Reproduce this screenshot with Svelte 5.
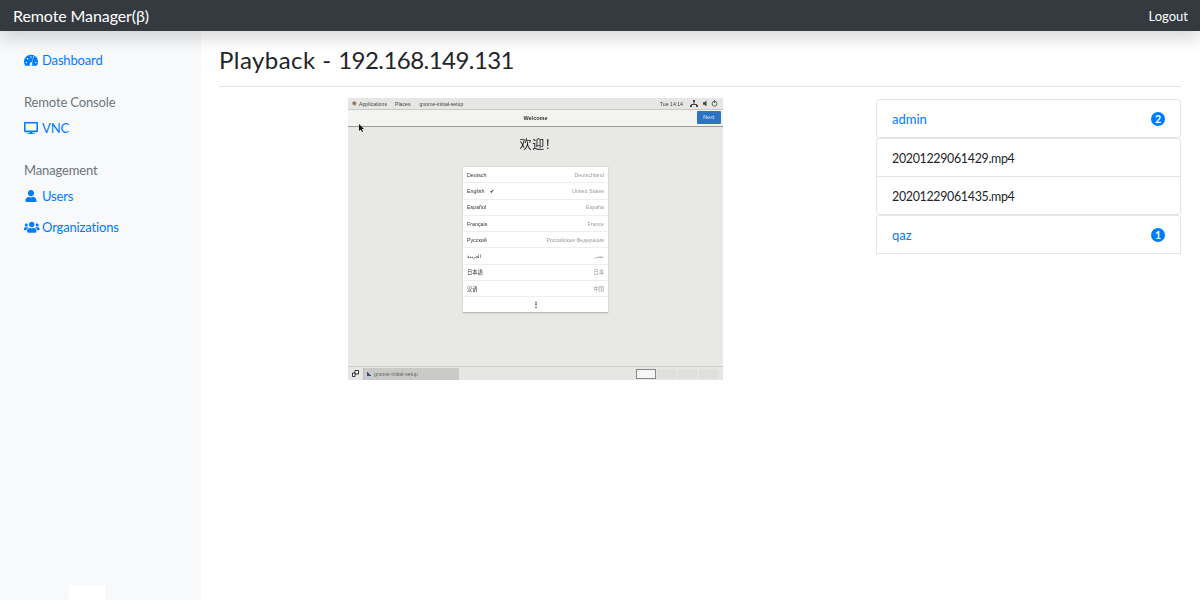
<script lang="ts">
  const languages = [
    { name: "Deutsch", region: "Deutschland" },
    { name: "English", region: "United States", checked: true },
    { name: "Español", region: "España" },
    { name: "Français", region: "France" },
    { name: "Русский", region: "Российская Федерация" },
    { name: "العربية", region: "مصر" },
    { name: "日本語", region: "日本" },
    { name: "汉语", region: "中国" },
  ];
</script>

<header class="navbar">
  <span class="brand">Remote Manager(β)</span>
  <span class="logout">Logout</span>
</header>

<div class="page">
  <nav class="sidebar">
    <a class="nav-link first">
      <svg class="icon" viewBox="0 0 576 512"><path d="M288 32C128.900 32 0 160.900 0 320c0 52.800 14.250 102.260 39.060 144.800 5.610 9.620 16.300 15.200 27.440 15.200h443c11.140 0 21.830-5.580 27.440-15.200C561.750 422.260 576 372.800 576 320c0-159.100-128.900-288-288-288zm0 64c14.710 0 26.580 10.130 30.320 23.650-1.110 2.260-2.640 4.230-3.320 6.740l-5.360 20.050c-6.180 4.390-13.360 7.560-21.640 7.560-17.670 0-32-14.330-32-32S270.330 96 288 96zM96 384c-17.670 0-32-14.330-32-32s14.330-32 32-32 32 14.330 32 32-14.330 32-32 32zm48-160c-17.670 0-32-14.330-32-32s14.330-32 32-32 32 14.330 32 32-14.330 32-32 32zm246.770-72.410l-61.330 230.080C338.560 388.510 344 405.590 344 424c0 17.740-4.870 34.320-13.180 48H245.180c-8.310-13.680-13.180-30.260-13.180-48 0-52.410 42.070-94.980 94.270-95.850l61.330-230.040c2.500-9.370 12.170-14.940 21.530-12.430 9.370 2.500 14.940 12.170 12.430 21.530zM480 384c-17.670 0-32-14.330-32-32s14.330-32 32-32 32 14.330 32 32-14.330 32-32 32z"/></svg>
      <span>Dashboard</span>
    </a>
    <h6>Remote Console</h6>
    <a class="nav-link">
      <svg class="icon" viewBox="0 0 576 512"><path d="M528 0H48C21.500 0 0 21.500 0 48v320c0 26.500 21.500 48 48 48h192l-16 48h-72c-13.300 0-24 10.700-24 24s10.700 24 24 24h272c13.300 0 24-10.700 24-24s-10.700-24-24-24h-72l-16-48h192c26.500 0 48-21.500 48-48V48c0-26.500-21.500-48-48-48zm-16 352H64V64h448v288z"/></svg>
      <span>VNC</span>
    </a>
    <h6>Management</h6>
    <a class="nav-link">
      <svg class="icon" viewBox="0 0 576 512"><path transform="translate(64)" d="M224 256c70.700 0 128-57.300 128-128S294.700 0 224 0 96 57.300 96 128s57.300 128 128 128zm89.600 32h-16.700c-22.200 10.200-46.900 16-72.900 16s-50.600-5.800-72.900-16h-16.700C60.200 288 0 348.200 0 422.400V464c0 26.500 21.500 48 48 48h352c26.500 0 48-21.500 48-48v-41.600c0-74.200-60.200-134.400-134.400-134.400z"/></svg>
      <span>Users</span>
    </a>
    <a class="nav-link">
      <svg class="icon wide" viewBox="0 0 640 512"><path d="M96 224c35.300 0 64-28.700 64-64s-28.700-64-64-64-64 28.700-64 64 28.700 64 64 64zm448 0c35.300 0 64-28.700 64-64s-28.700-64-64-64-64 28.700-64 64 28.700 64 64 64zm32 32h-64c-17.600 0-33.500 7.100-45.100 18.600 40.300 22.100 68.900 62 75.100 109.400h66c17.700 0 32-14.300 32-32v-32c0-35.300-28.700-64-64-64zm-256 0c61.900 0 112-50.100 112-112S381.900 32 320 32 208 82.100 208 144s50.100 112 112 112zm76.800 32h-8.300c-20.800 10-43.900 16-68.500 16s-47.600-6-68.500-16h-8.300C179.600 288 128 339.600 128 403.200V432c0 26.500 21.500 48 48 48h288c26.500 0 48-21.500 48-48v-28.800c0-63.600-51.600-115.200-115.200-115.200zm-223.700-13.400C161.500 263.100 145.600 256 128 256H64c-35.300 0-64 28.700-64 64v32c0 17.700 14.300 32 32 32h65.900c6.300-47.400 34.900-87.300 75.200-109.400z"/></svg>
      <span>Organizations</span>
    </a>
    <div class="scroll-stub"></div>
  </nav>

  <main>
    <h1>Playback - <span class="ip">192.168.149.131</span></h1>
    <div class="content">
      <div class="player-col">
        <div class="player">
          <div class="g-top">
            <svg class="g-foot" viewBox="0 0 6 6"><circle cx="3" cy="3" r="2.500" fill="#a88a5c"/><circle cx="2" cy="2" r="1" fill="#5b4a8a"/></svg>
            <span>Applications</span><span class="g-places">Places</span><span class="g-app">gnome-initial-setup</span>
            <span class="g-clock">Tue 14:14</span>
            <svg class="g-status" viewBox="0 0 28 7"><path d="M3 0h2v2H3zM0 5h2v2H0zM6 5h2v2H6zM3.500 2h1v2h-1zM1 4h6v1H1z" fill="#444"/><path d="M13 2.300h1.500l2-1.800v6l-2-1.800H13z" fill="#444"/><circle cx="24.500" cy="3.700" r="2.400" fill="none" stroke="#444" stroke-width=".8"/><path d="M24.500 0v3" stroke="#444" stroke-width=".8"/></svg>
          </div>
          <div class="g-head">
            <span class="g-welcome">Welcome</span>
            <span class="g-next">Next</span>
          </div>
          <div class="g-body">
            <svg class="g-cursor" viewBox="0 0 6 8"><path d="M0 0v7l1.700-1.500L3 8l1-.5-1.200-2.400H5z" fill="#111"/></svg>
            <div class="g-title">欢迎！</div>
            <div class="g-list">
              {#each languages as lang}
                <div class="g-row">
                  <span class="g-lang">{lang.name}{#if lang.checked}<b>✔</b>{/if}</span>
                  <span class="g-region">{lang.region}</span>
                </div>
              {/each}
              <div class="g-more">⋮</div>
            </div>
          </div>
          <div class="g-bottom">
            <svg class="g-win" viewBox="0 0 7 7"><path d="M3 .5h3.500V4H3z" fill="#fff" stroke="#222" stroke-width=".9"/><path d="M.5 3H3v3.500H.5z" fill="#fff" stroke="#222" stroke-width=".9"/></svg>
            <span class="g-task"><i></i>gnome-initial-setup</span>
            <span class="g-work active"></span><span class="g-work"></span><span class="g-work"></span><span class="g-work"></span>
          </div>
        </div>
      </div>

      <div class="lists">
        <div class="group">
          <div class="item user"><span>admin</span><em>2</em></div>
        </div>
        <div class="group files">
          <div class="item">20201229061429.mp4</div>
          <div class="item">20201229061435.mp4</div>
        </div>
        <div class="group">
          <div class="item user"><span>qaz</span><em>1</em></div>
        </div>
      </div>
    </div>
  </main>
</div>

<style>
  :global(body) {
    margin: 0;
    background: #fff;
    color: #212529;
    font-family: Lato, "Noto Sans CJK SC", sans-serif;
    overflow: hidden;
  }

  .navbar {
    position: relative;
    z-index: 2;
    height: 31px;
    display: flex;
    align-items: center;
    justify-content: space-between;
    padding: 0 12px 0 13px;
    background: #343a40;
    box-shadow: 0 8px 16px rgba(0, 0, 0, 0.15);
    color: #fff;
  }

  .brand {
    font-size: 16px;
    letter-spacing: -0.100px;
  }

  .logout {
    font-size: 13px;
  }

  .page {
    display: flex;
    height: 569px;
  }

  .sidebar {
    position: relative;
    width: 201px;
    flex: none;
    box-sizing: border-box;
    padding-top: 19px;
    background: #f8f9fa;
    font-size: 13px;
    letter-spacing: -0.150px;
  }

  .nav-link {
    display: flex;
    align-items: center;
    height: 20px;
    margin-bottom: 11px;
    padding-left: 24px;
    color: #007bff;
  }

  .nav-link:has(+ h6) {
    margin-bottom: 22px;
  }

  .icon {
    width: 14px;
    height: 12.500px;
    margin-right: 4px;
    fill: #007bff;
    flex: none;
  }

  .icon.wide {
    width: 15.500px;
    margin-right: 2.500px;
  }

  h6 {
    margin: 0 0 6px;
    padding-left: 24px;
    height: 20px;
    line-height: 20px;
    font-size: 13px;
    font-weight: 400;
    color: #6c757d;
  }

  .scroll-stub {
    position: absolute;
    left: 69px;
    bottom: 0;
    width: 36px;
    height: 15px;
    background: #fff;
  }

  main {
    flex: 1;
    min-width: 0;
    padding: 0 19px 0 18px;
  }

  h1 {
    margin: 0 0 11px;
    padding: 12px 0 9px;
    height: 34px;
    line-height: 34px;
    border-bottom: 1px solid #dee2e6;
    font-size: 24px;
    font-weight: 400;
    letter-spacing: 0.450px;
    color: #212529;
  }

  .ip {
    letter-spacing: -0.550px;
  }

  .content {
    display: grid;
    grid-template-columns: 633px 305px;
    gap: 24px;
  }

  .player-col {
    display: flex;
    justify-content: center;
  }

  .player {
    width: 375px;
    height: 282px;
    display: flex;
    flex-direction: column;
    background: #e8e8e7;
    font-family: "Liberation Sans", "Noto Sans CJK SC", sans-serif;
    color: #333;
    filter: blur(0.3px);
  }

  .g-top {
    height: 11px;
    display: flex;
    align-items: center;
    gap: 2px;
    padding: 0 4px;
    background: #e6e6e4;
    border-bottom: 1px solid #c9c9c7;
    font-size: 5.200px;
    color: #444;
  }

  .g-foot {
    width: 5px;
    height: 5px;
  }

  .g-places {
    margin-left: 6px;
  }

  .g-app {
    margin-left: 7px;
  }

  .g-clock {
    margin-left: auto;
    margin-right: 5px;
  }

  .g-status {
    width: 28px;
    height: 7px;
    margin-right: 1px;
  }

  .g-head {
    position: relative;
    height: 16px;
    background: #f3f3f1;
    border-bottom: 1px solid #9a9a98;
    display: flex;
    align-items: center;
    justify-content: center;
    font-size: 5.500px;
    font-weight: 700;
  }

  .g-next {
    position: absolute;
    right: 2px;
    top: 1px;
    width: 24px;
    height: 13px;
    border-radius: 1px;
    background: #2b74c4;
    color: #dde8f5;
    font-weight: 400;
    text-align: center;
    line-height: 13px;
  }

  .g-body {
    position: relative;
    flex: 1;
    display: flex;
    flex-direction: column;
    align-items: center;
    padding-top: 10px;
  }

  .g-cursor {
    position: absolute;
    left: 11px;
    top: -3px;
    width: 6px;
    height: 8px;
  }

  .g-title {
    height: 16px;
    line-height: 16px;
    margin: 0 0 14px 6px;
    font-size: 12px;
    letter-spacing: 0.700px;
    color: #111;
  }

  .g-list {
    width: 145px;
    background: #fff;
    box-shadow: 0 0 0 0.500px #c9c9c7;
    border-bottom: 1px solid #bdbdbb;
  }

  .g-row {
    height: 16.300px;
    box-sizing: border-box;
    display: flex;
    align-items: center;
    justify-content: space-between;
    padding: 0 4px;
    border-bottom: 1px solid #eeeeec;
    font-size: 5.300px;
  }

  .g-lang {
    color: #333;
  }

  .g-lang b {
    margin-left: 6px;
    font-size: 5px;
  }

  .g-region {
    color: #999;
  }

  .g-more {
    height: 15px;
    line-height: 15px;
    text-align: center;
    font-size: 8px;
    font-weight: 700;
    color: #333;
  }

  .g-bottom {
    height: 13px;
    display: flex;
    align-items: center;
    border-top: 1px solid #cfcfcd;
    background: #e6e6e4;
    font-size: 5.200px;
    color: #666;
  }

  .g-win {
    width: 7px;
    height: 7px;
    margin: 0 4px;
  }

  .g-task {
    width: 96px;
    height: 12px;
    display: flex;
    align-items: center;
    gap: 2px;
    background: #c9c9c7;
    border-left: 1px solid #bbb;
    box-sizing: border-box;
    padding-left: 3px;
    margin-right: auto;
  }

  .g-task i {
    width: 5px;
    height: 5px;
    background: linear-gradient(45deg, #35508f 40%, transparent 45%);
  }

  .g-work {
    width: 19.500px;
    height: 10px;
    margin-right: 1.300px;
    background: #e0e0de;
    box-sizing: border-box;
  }

  .g-work:last-child {
    margin-right: 5px;
  }

  .g-work.active {
    background: #f6f6f4;
    border: 1px solid #888;
  }

  .lists {
    display: flex;
    flex-direction: column;
    padding-top: 1px;
  }

  .group {
    border: 1px solid #e3e5e8;
    border-radius: 3px;
    background: #fff;
  }

  .group:last-child {
    border-bottom-left-radius: 0;
    border-bottom-right-radius: 0;
  }

  .item {
    box-sizing: border-box;
    height: 37px;
    display: flex;
    align-items: center;
    justify-content: space-between;
    padding: 0 15px;
    font-size: 12.400px;
    letter-spacing: -0.300px;
    color: #212529;
  }

  .files .item {
    padding-top: 1px;
  }

  .files .item + .item {
    height: 38px;
    border-top: 1px solid #e3e5e8;
  }

  .user {
    font-size: 13px;
    letter-spacing: 0;
  }

  .user span {
    color: #007bff;
  }

  .user em {
    width: 14px;
    height: 14px;
    border-radius: 50%;
    background: #007bff;
    color: #fff;
    font-style: normal;
    font-weight: 700;
    font-size: 10.500px;
    line-height: 14px;
    text-align: center;
  }
</style>
